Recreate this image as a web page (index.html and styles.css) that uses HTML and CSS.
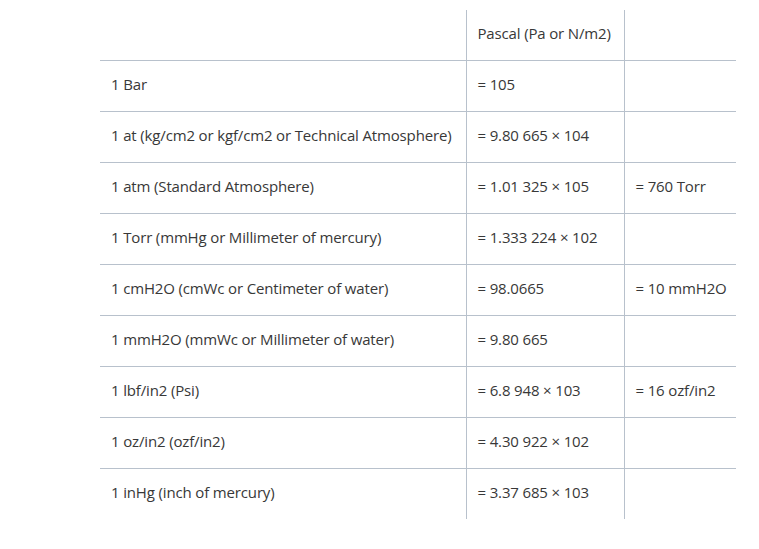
FILE: index.html
```html
<!DOCTYPE html>
<html>
<head>
<meta charset="utf-8">
<link rel="stylesheet" href="styles.css">
</head>
<body>
<div class="wrap">
<table class="units">
<colgroup><col class="c1"><col class="c2"><col class="c3"></colgroup>
<thead>
<tr><th></th><th>Pascal (Pa or N/m2)</th><th></th></tr>
</thead>
<tbody>
<tr><td>1 Bar</td><td>= 105</td><td></td></tr>
<tr><td>1 at (kg/cm2 or kgf/cm2 or Technical Atmosphere)</td><td>= 9.80 665 × 104</td><td></td></tr>
<tr><td>1 atm (Standard Atmosphere)</td><td>= 1.01 325 × 105</td><td>= 760 Torr</td></tr>
<tr><td>1 Torr (mmHg or Millimeter of mercury)</td><td>= 1.333 224 × 102</td><td></td></tr>
<tr><td>1 cmH2O (cmWc or Centimeter of water)</td><td>= 98.0665</td><td>= 10 mmH2O</td></tr>
<tr><td>1 mmH2O (mmWc or Millimeter of water)</td><td>= 9.80 665</td><td></td></tr>
<tr><td>1 lbf/in2 (Psi)</td><td>= 6.8 948 × 103</td><td>= 16 ozf/in2</td></tr>
<tr><td>1 oz/in2 (ozf/in2)</td><td>= 4.30 922 × 102</td><td></td></tr>
<tr><td>1 inHg (inch of mercury)</td><td>= 3.37 685 × 103</td><td></td></tr>
</tbody>
</table>
</div>
</body>
</html>
```
FILE: styles.css
```css
html, body {
  margin: 0;
  padding: 0;
  background: #fff;
}
.wrap {
  padding: 10px 0 0 100px;
}
.units {
  border-collapse: collapse;
  table-layout: fixed;
  width: 636px;
  font-family: "Open Sans", sans-serif;
  font-size: 15px;
  color: #383838;
  letter-spacing: -0.15px;
}
.c1 { width: 366px; }
.c2 { width: 158px; }
.c3 { width: 112px; }
.units th, .units td {
  font-weight: normal;
  text-align: left;
  height: 50px;
  padding: 0 11px 3px;
  box-sizing: border-box;
  vertical-align: middle;
  white-space: nowrap;
}
.units th + th, .units td + td {
  border-left: 1px solid #b8c1cc;
}
.units tbody tr td {
  border-top: 1px solid #b8c1cc;
  height: 51px;
}
```
